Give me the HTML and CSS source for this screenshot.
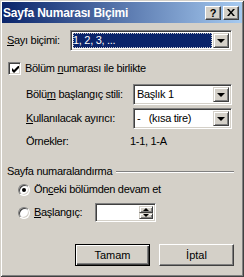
FILE: index.html
```html
<!DOCTYPE html>
<html lang="tr">
<head>
  <meta charset="UTF-8" />
  <title>Sayfa Numarası Biçimi</title>
  <link rel="stylesheet" href="styles.css">
</head>
<body>
  <div class="dialog">
    <div class="titlebar">
      <span class="title">Sayfa Numarası Biçimi</span>
      <div class="title-buttons">
        <span class="tbtn help">?</span>
        <span class="tbtn">
          <svg width="8" height="7" viewBox="0 0 8 7">
            <path d="M0 0h2l2 2.5L6 0h2L5 3.5 8 7H6L4 4.5 2 7H0l3-3.5z" fill="#000"/>
          </svg>
        </span>
      </div>
    </div>

    <div class="content">
      <div class="row format-row">
        <span class="main-label"><u>S</u>ayı biçimi:</span>
        <div class="combo combo-wide">
          <div class="combo-value"><span class="selection">1, 2, 3, ...</span></div>
          <div class="combo-btn"><i class="arrow"></i></div>
        </div>
      </div>

      <div class="row check-row">
        <span class="checkbox">
          <svg width="7" height="7" viewBox="0 0 7 7">
            <path d="M0 2l2 2 5-5v3L2 7 0 5z" fill="#000"/>
          </svg>
        </span>
        <span>Bölüm <u>n</u>umarası ile birlikte</span>
      </div>

      <div class="sub">
        <div class="row field-row">
          <span class="sub-label">Bölü<u>m</u> başlangıç stili:</span>
          <div class="combo combo-narrow">
            <div class="combo-value">Başlık 1</div>
            <div class="combo-btn"><i class="arrow"></i></div>
          </div>
        </div>
        <div class="row field-row second">
          <span class="sub-label"><u>K</u>ullanılacak ayırıcı:</span>
          <div class="combo combo-narrow">
            <div class="combo-value">-&nbsp;&nbsp;&nbsp;(kısa tire)</div>
            <div class="combo-btn"><i class="arrow"></i></div>
          </div>
        </div>
        <div class="row sample-row">
          <span class="sample-label">Örnekler:</span>
          <span>1-1, 1-A</span>
        </div>
      </div>

      <div class="group-head">
        <span>Sayfa numaralandırma</span>
        <span class="etch"></span>
      </div>

      <div class="row radio-row">
        <span class="radio checked"></span>
        <span>Ön<u>c</u>eki bölümden devam et</span>
      </div>

      <div class="row radio-row start-row">
        <span class="radio"></span>
        <span class="start-label"><u>B</u>aşlangıç:</span>
        <div class="spin">
          <div class="spin-value"></div>
          <div class="spin-btns">
            <span class="spin-btn"><i class="up"></i></span>
            <span class="spin-btn"><i class="down"></i></span>
          </div>
        </div>
      </div>

      <div class="buttons">
        <button type="button" class="btn default"><span>Tamam</span></button>
        <button type="button" class="btn"><span>İptal</span></button>
      </div>
    </div>
  </div>
</body>
</html>
```

FILE: styles.css
```css
:root {
  --face: #d4d0c8;
  --shadow: #808080;
  --dark: #404040;
  --light: #ffffff;
  --title-from: #0a246a;
  --title-to: #a6caf0;
}

* {
  box-sizing: border-box;
  margin: 0;
  padding: 0;
}

body {
  font-family: 'Liberation Sans', Arial, sans-serif;
  font-size: 11px;
  letter-spacing: -0.3px;
  color: #000;
  background: var(--face);
}

u {
  text-decoration: underline;
  text-underline-offset: 1px;
}

.dialog {
  width: 244px;
  height: 277px;
  padding: 2px;
  background: var(--face);
  box-shadow:
    inset 1px 1px 0 var(--face),
    inset -1px -1px 0 var(--dark),
    inset 2px 2px 0 var(--light),
    inset -2px -2px 0 var(--shadow);
}

/* Title bar */
.titlebar {
  height: 21px;
  display: flex;
  align-items: center;
  justify-content: space-between;
  padding: 0 3px 0 1px;
  background: linear-gradient(90deg, var(--title-from), var(--title-to));
}

.title {
  color: #fff;
  font-weight: bold;
  font-size: 12px;
  letter-spacing: -0.2px;
}

.title-buttons {
  display: flex;
  gap: 2px;
}

.tbtn {
  width: 16px;
  height: 14px;
  display: flex;
  align-items: center;
  justify-content: center;
  background: var(--face);
  border: 1px solid;
  border-color: var(--light) var(--dark) var(--dark) var(--light);
  box-shadow: inset -1px -1px 0 var(--shadow);
}

.tbtn.help {
  font-weight: bold;
  font-size: 11px;
  line-height: 12px;
  letter-spacing: 0;
}

/* Body */
.content {
  padding: 7px 5px 0;
}

.row {
  display: flex;
  align-items: center;
  line-height: 13px;
}

.format-row {
  height: 21px;
}

.main-label {
  width: 63px;
}

.combo {
  height: 21px;
  display: flex;
  background: #fff;
  border: 1px solid;
  border-color: var(--shadow) var(--light) var(--light) var(--shadow);
  box-shadow: inset 1px 1px 0 var(--dark), inset -1px -1px 0 var(--face);
  padding: 2px;
}

.combo-wide {
  width: 162px;
}

.combo-narrow {
  width: 99px;
}

.combo-value {
  flex: 1;
  display: flex;
  align-items: center;
  padding-left: 1px;
  white-space: nowrap;
  overflow: hidden;
}

.selection {
  display: flex;
  align-items: center;
  width: 100%;
  height: 100%;
  margin-left: -1px;
  background: #0a246a;
  color: #fff;
  outline: 1px dotted #c8c8c8;
  outline-offset: -1px;
}

.combo-btn {
  width: 16px;
  display: flex;
  align-items: center;
  justify-content: center;
  background: var(--face);
  border: 1px solid;
  border-color: var(--face) var(--dark) var(--dark) var(--face);
  box-shadow: inset 1px 1px 0 var(--light), inset -1px -1px 0 var(--shadow);
}

.arrow {
  width: 0;
  height: 0;
  border-left: 4px solid transparent;
  border-right: 4px solid transparent;
  border-top: 4px solid #000;
}

/* Checkbox */
.check-row {
  height: 13px;
  margin-top: 11px;
}

.checkbox {
  width: 13px;
  height: 13px;
  margin: 0 4px 0 1px;
  display: flex;
  align-items: center;
  justify-content: center;
  background: #fff;
  border: 1px solid;
  border-color: var(--shadow) var(--light) var(--light) var(--shadow);
  box-shadow: inset 1px 1px 0 var(--dark), inset -1px -1px 0 var(--face);
}

.checkbox svg {
  margin: 1px 0 0 1px;
}

/* Indented fields */
.sub {
  padding-left: 19px;
}

.field-row {
  height: 21px;
  margin-top: 9px;
}

.field-row.second {
  margin-top: 3px;
}

.sub-label {
  width: 107px;
}

.sample-row {
  height: 13px;
  margin-top: 6px;
}

.sample-label {
  width: 104px;
}

/* Group */
.group-head {
  display: flex;
  align-items: center;
  height: 14px;
  margin-top: 16px;
  line-height: 13px;
}

.etch {
  flex: 1;
  height: 2px;
  margin: 1px 3px 0 4px;
  border-top: 1px solid var(--shadow);
  border-bottom: 1px solid var(--light);
}

.radio-row {
  height: 13px;
  margin-top: 5px;
}

.radio {
  width: 12px;
  height: 12px;
  margin: 0 4px 0 11px;
  display: flex;
  align-items: center;
  justify-content: center;
  border-radius: 50%;
  background: #fff;
  border: 1px solid;
  border-color: var(--shadow) var(--light) var(--light) var(--shadow);
  box-shadow: inset 1px 1px 0 var(--dark), inset -1px -1px 0 var(--face);
}

.radio.checked::after {
  content: '';
  width: 4px;
  height: 4px;
  border-radius: 50%;
  background: #000;
}

.start-row {
  height: 19px;
  margin-top: 7px;
}

.start-label {
  width: 61px;
}

.spin {
  width: 61px;
  height: 19px;
  display: flex;
  background: #fff;
  border: 1px solid;
  border-color: var(--shadow) var(--light) var(--light) var(--shadow);
  box-shadow: inset 1px 1px 0 var(--dark), inset -1px -1px 0 var(--face);
  padding: 2px;
}

.spin-value {
  flex: 1;
}

.spin-btns {
  width: 14px;
  display: flex;
  flex-direction: column;
}

.spin-btn {
  flex: 1;
  display: flex;
  align-items: center;
  justify-content: center;
  background: var(--face);
  border: 1px solid;
  border-color: var(--face) var(--dark) var(--dark) var(--face);
  box-shadow: inset 1px 1px 0 var(--light), inset -1px -1px 0 var(--shadow);
}

.spin-btn i {
  width: 0;
  height: 0;
  border-left: 3px solid transparent;
  border-right: 3px solid transparent;
}

.spin-btn .up {
  border-bottom: 3px solid #000;
}

.spin-btn .down {
  border-top: 3px solid #000;
}

/* Buttons */
.buttons {
  display: flex;
  justify-content: flex-end;
  gap: 9px;
  margin-top: 22px;
  padding-right: 3px;
}

.btn {
  width: 75px;
  height: 22px;
  font: inherit;
  color: #000;
  background: var(--face);
  border: 1px solid;
  border-color: var(--light) var(--dark) var(--dark) var(--light);
  box-shadow: inset -1px -1px 0 var(--shadow);
}

.btn.default {
  border: 1px solid #000;
  box-shadow:
    inset 1px 1px 0 var(--light),
    inset -1px -1px 0 var(--dark),
    inset -2px -2px 0 var(--shadow);
}
```
